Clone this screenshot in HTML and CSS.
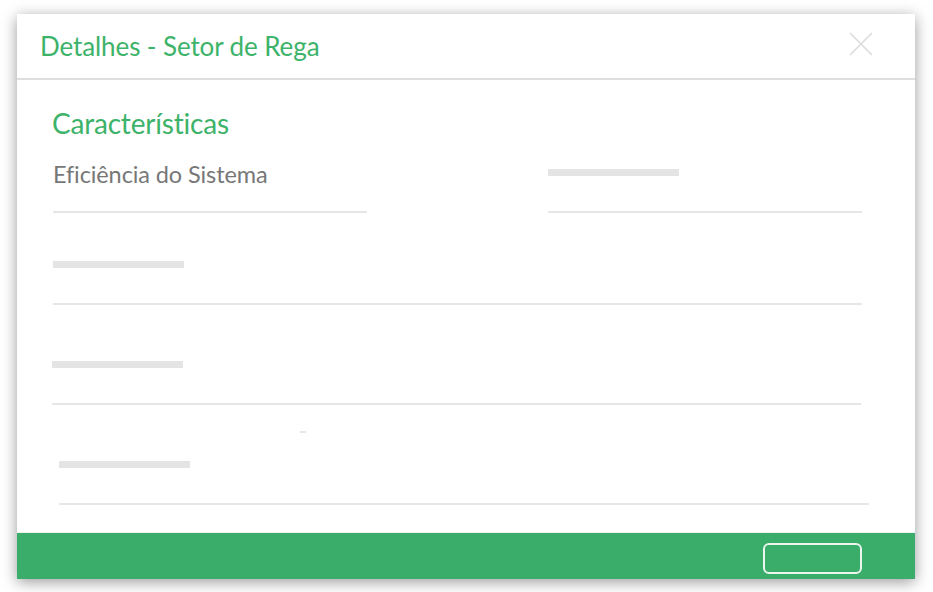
FILE: index.html
```html
<!DOCTYPE html>
<html>
	<head>
		<meta charset="UTF-8">
		<title>Detalhes - Setor de Rega</title>
		<link rel="stylesheet" href="styles.css">
	</head>
	<body>
		<div class="page">
			<div class="modal">
				<div class="modal-header">
					<h4 class="modal-title">Detalhes - Setor de Rega</h4>
					<span class="close">
						<svg width="24" height="24" viewBox="0 0 24 24">
							<path d="M1 1L23 23M23 1L1 23" stroke="#dcdcdc" stroke-width="1.6" fill="none"/>
						</svg>
					</span>
				</div>
				<div class="modal-body">
					<h3 class="section-title">Características</h3>
					<div class="row first">
						<div class="field">
							<div class="label">Eficiência do Sistema</div>
							<div class="line"></div>
						</div>
						<div class="field">
							<div class="bar"></div>
							<div class="line"></div>
						</div>
					</div>
					<div class="row second">
						<div class="field wide">
							<div class="bar"></div>
							<div class="line"></div>
						</div>
					</div>
					<div class="row">
						<div class="field wide nudge-left">
							<div class="bar"></div>
							<div class="line"></div>
						</div>
					</div>
					<div class="row shifted">
						<div class="field wide">
							<div class="dash"></div>
							<div class="bar"></div>
							<div class="line"></div>
						</div>
					</div>
				</div>
				<div class="modal-footer">
					<button class="btn-outline"></button>
				</div>
			</div>
		</div>
	</body>
</html>
```

FILE: styles.css
```css
*{
	padding: 0;
	margin: 0;
	box-sizing: border-box;
}
body{
	background: #fff;
	font-family: Lato, "Open Sans", sans-serif;
}
.page{
	width: 933px;
	height: 592px;
	padding: 14px 18px 13px 17px;
}
.modal{
	width: 898px;
	height: 565px;
	background: #fff;
	display: flex;
	flex-direction: column;
	box-shadow: 0 3px 14px rgba(0,0,0,0.4);
}
.modal-header{
	height: 66px;
	border-bottom: 2px solid #dedede;
	display: flex;
	align-items: center;
	justify-content: space-between;
	padding: 0 42px 0 23px;
}
.modal-title{
	font-weight: normal;
	font-size: 26px;
	color: #3db36a;
	letter-spacing: -0.1px;
}
.close{
	display: flex;
	width: 24px;
	height: 24px;
	margin-top: -4px;
}
.modal-body{
	flex: 1;
	padding: 24px 53px 0 35px;
	display: flex;
	flex-direction: column;
}
.section-title{
	font-weight: normal;
	font-size: 28px;
	line-height: 38px;
	color: #3db36a;
	letter-spacing: -0.2px;
}
.row{
	display: flex;
	height: 100px;
	padding-left: 1px;
}
.row.first{
	height: 63px;
	margin-top: 8px;
	justify-content: space-between;
}
.row.second{
	height: 92px;
}
.row.second .bar{
	margin-top: 48px;
}
.row.shifted{
	padding-left: 7px;
	margin-right: -7px;
}
.field{
	width: 314px;
	display: flex;
	flex-direction: column;
}
.field.wide{
	width: 100%;
}
.nudge-left{
	margin-left: -1px;
}
.label{
	font-size: 23.5px;
	line-height: 30px;
	color: #777;
	margin-top: 9px;
	letter-spacing: -0.1px;
	white-space: nowrap;
}
.bar{
	width: 131px;
	height: 7px;
	background: #e4e4e4;
	margin-top: 56px;
}
.row.first .bar{
	margin-top: 19px;
}
.dash{
	width: 6px;
	height: 2px;
	background: #e6e6e6;
	margin: 26px 0 0 241px;
}
.dash + .bar{
	margin-top: 28px;
}
.line{
	height: 2px;
	background: #e6e6e6;
	margin-top: auto;
}
.modal-footer{
	height: 47px;
	background: #3aad6a;
	border-top: 1px solid #e8f4ec;
	display: flex;
	align-items: flex-start;
	justify-content: flex-end;
	padding: 10px 53px 0 0;
}
.btn-outline{
	width: 99px;
	height: 31px;
	border: 2px solid #eaf6ee;
	border-radius: 6px;
	background: transparent;
}
```
